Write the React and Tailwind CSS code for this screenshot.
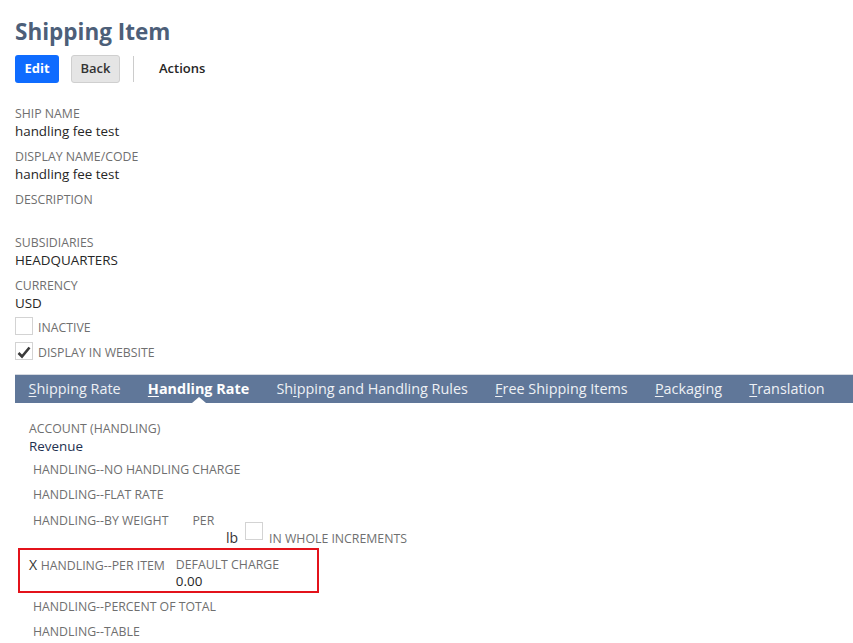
import React from 'react';

const font = { fontFamily: '"Open Sans", "Liberation Sans", sans-serif' };

const Field = ({ label, value }) => (
  <div>
    <div className="text-[12.3px] leading-[17px] text-[#6f6f6f] uppercase">{label}</div>
    <div className="text-[13.4px] leading-[18px] text-[#262626] min-h-[18px]">{value}</div>
  </div>
);

const Checkbox = ({ checked }) => (
  <span className="inline-flex w-[18px] h-[18px] border border-[#d3d3d3] bg-white items-end justify-center">
    {checked && (
      <svg width="14" height="13" viewBox="0 0 14 13">
        <path d="M1.5 7 L5 10.5 L12.5 1.5" fill="none" stroke="#3a3a3a" strokeWidth="2.6" />
      </svg>
    )}
  </span>
);

const Tab = ({ u, rest, pre = '', active }) => (
  <div className={`relative px-[13.6px] text-[14.4px] leading-[28px] ${active ? 'font-bold text-white' : 'text-[#eef1f5]'}`}>
    {pre}<span className="underline underline-offset-2">{u}</span>{rest}
    {active && (
      <span className="absolute left-1/2 -translate-x-1/2 bottom-0 w-0 h-0 border-l-[7px] border-r-[7px] border-b-[6px] border-l-transparent border-r-transparent border-b-white" />
    )}
  </div>
);

const Row = ({ children, className = '' }) => (
  <div className={`text-[12.3px] leading-[17px] text-[#6f6f6f] uppercase ${className}`}>{children}</div>
);

export default function App() {
  return (
    <div style={font} className="bg-white min-h-[643px] w-[853px] overflow-hidden pl-[15px] pt-[18px]">
      <h1 className="text-[22.5px] font-bold leading-[28px] text-[#4d5f79]">Shipping Item</h1>

      <div className="flex items-center mt-[9px] h-[28px]">
        <button className="h-[28px] w-[44px] rounded-[3px] bg-[#0f6cff] text-white text-[13px] font-bold">Edit</button>
        <button className="ml-[12px] h-[28px] w-[49px] rounded-[3px] bg-[#e5e5e5] border border-[#cfcfcf] text-[#333] text-[13px] font-semibold">Back</button>
        <span className="ml-[13px] w-px h-[26px] bg-[#cccccc]" />
        <span className="ml-[25px] text-[13px] font-semibold text-[#262626]">Actions</span>
      </div>

      <div className="mt-[22px] flex flex-col gap-[8px]">
        <Field label="Ship Name" value="handling fee test" />
        <Field label="Display Name/Code" value="handling fee test" />
        <Field label="Description" value="" />
        <Field label="Subsidiaries" value="HEADQUARTERS" />
        <Field label="Currency" value="USD" />
      </div>

      <div className="mt-[5px] flex items-end gap-[5px]">
        <Checkbox />
        <span className="text-[12.3px] leading-[15px] text-[#6f6f6f]">INACTIVE</span>
      </div>
      <div className="mt-[7px] flex items-end gap-[5px]">
        <Checkbox checked />
        <span className="text-[12.3px] leading-[15px] text-[#6f6f6f]">DISPLAY IN WEBSITE</span>
      </div>

      <div className="mt-[14px] border-t border-[#d5d9e0] bg-[#607799] flex h-[29px]">
        <Tab u="S" rest="hipping Rate" />
        <Tab u="H" rest="andling Rate" active />
        <Tab pre="Sh" u="i" rest="pping and Handling Rules" />
        <Tab u="F" rest="ree Shipping Items" />
        <Tab u="P" rest="ackaging" />
        <Tab u="T" rest="ranslation" />
      </div>

      <div className="pl-[14px] mt-[17px]">
        <div className="text-[12.3px] leading-[17px] text-[#6f6f6f]">ACCOUNT (HANDLING)</div>
        <div className="text-[13.4px] leading-[18px] text-[#1f3251]">Revenue</div>
      </div>

      <div className="pl-[18px] mt-[6px] flex flex-col">
        <Row>Handling--No Handling Charge</Row>
        <Row className="mt-[8px]">Handling--Flat Rate</Row>
        <Row className="mt-[9px] flex">
          <span>Handling--By Weight</span>
          <span className="ml-[24px]">Per</span>
        </Row>
        <div className="flex items-end ml-[193px] mt-[-7px]">
          <span className="text-[14px] leading-[16px] text-[#333]">lb</span>
          <span className="ml-[7px]"><Checkbox /></span>
          <span className="ml-[6px] text-[12.3px] leading-[15px] text-[#6f6f6f]">IN WHOLE INCREMENTS</span>
        </div>
      </div>

      <div className="ml-[3px] mt-[2px] w-[301px] h-[45px] border-2 border-[#e3131b] flex pl-[9px] pt-[6px]">
        <div className="text-[12.3px] leading-[17px] text-[#6f6f6f]">
          <span className="text-[14px] text-[#333]">X </span>HANDLING--PER ITEM
        </div>
        <div className="ml-[11px]">
          <div className="text-[12.3px] leading-[17px] text-[#6f6f6f]">DEFAULT CHARGE</div>
          <div className="text-[13.4px] leading-[17px] text-[#262626]">0.00</div>
        </div>
      </div>

      <div className="pl-[18px] mt-[5px] flex flex-col">
        <Row>Handling--Percent of Total</Row>
        <Row className="mt-[8px]">Handling--Table</Row>
      </div>
    </div>
  );
}
